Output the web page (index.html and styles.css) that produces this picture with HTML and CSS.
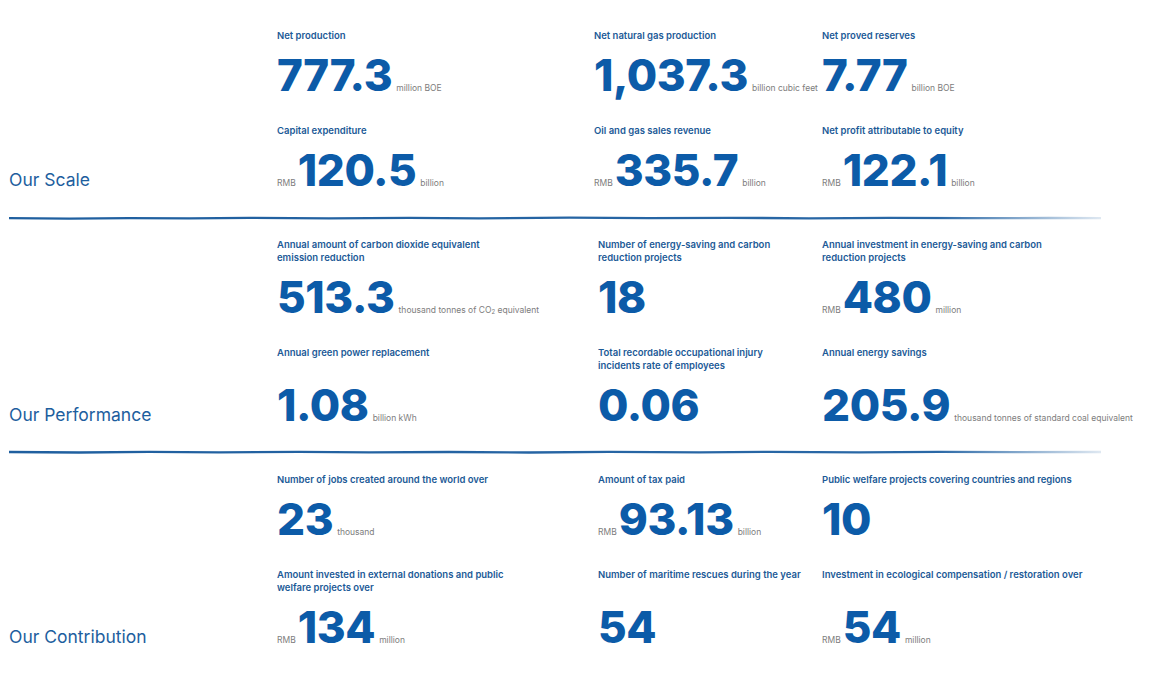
FILE: index.html
```html
<!DOCTYPE html>
<html lang="en">
<head>
<meta charset="utf-8">
<title>Key figures</title>
<link rel="stylesheet" href="styles.css">
</head>
<body>
<main class="page">
  <section class="section s1">
    <h2 class="title">Our Scale</h2>
    <div class="grid">
      <div class="cell"><p class="label">Net production</p><div class="fig"><span class="num">777.3</span><span class="unit">million BOE</span></div></div>
      <div class="cell"><p class="label">Net natural gas production</p><div class="fig"><span class="num">1,037.3</span><span class="unit">billion cubic feet</span></div></div>
      <div class="cell"><p class="label">Net proved reserves</p><div class="fig"><span class="num">7.77</span><span class="unit">billion BOE</span></div></div>
      <div class="cell"><p class="label">Capital expenditure</p><div class="fig"><span class="pre">RMB</span><span class="num">120.5</span><span class="unit">billion</span></div></div>
      <div class="cell"><p class="label">Oil and gas sales revenue</p><div class="fig"><span class="pre">RMB</span><span class="num">335.7</span><span class="unit">billion</span></div></div>
      <div class="cell"><p class="label">Net profit attributable to equity</p><div class="fig"><span class="pre">RMB</span><span class="num">122.1</span><span class="unit">billion</span></div></div>
    </div>
  </section>
  <div class="divider"><svg viewBox="0 0 1092 6" preserveAspectRatio="none"><defs><linearGradient id="g1" x1="0" x2="1" y1="0" y2="0"><stop offset="0" stop-color="#1f5f9f"/><stop offset="0.85" stop-color="#2a68a6"/><stop offset="1" stop-color="#2a68a6" stop-opacity="0.15"/></linearGradient></defs><path d="M0 3.2 L60 3.6 L120 3.1 L180 3.4 L240 2.8 L320 3.3 L400 2.9 L470 3.4 L560 2.7 L640 3.2 L720 2.8 L800 3.3 L880 2.9 L960 3.2 L1040 3.0 L1092 3.1" fill="none" stroke="url(#g1)" stroke-width="2.3" stroke-linecap="round"/></svg></div>
  <section class="section s2">
    <h2 class="title">Our Performance</h2>
    <div class="grid">
      <div class="cell"><p class="label">Annual amount of carbon dioxide equivalent<br>emission reduction</p><div class="fig"><span class="num">513.3</span><span class="unit">thousand tonnes of CO<sub>2</sub> equivalent</span></div></div>
      <div class="cell"><p class="label">Number of energy-saving and carbon<br>reduction projects</p><div class="fig"><span class="num">18</span></div></div>
      <div class="cell"><p class="label">Annual investment in energy-saving and carbon<br>reduction projects</p><div class="fig"><span class="pre">RMB</span><span class="num">480</span><span class="unit">million</span></div></div>
      <div class="cell"><p class="label">Annual green power replacement</p><div class="fig"><span class="num">1.08</span><span class="unit">billion kWh</span></div></div>
      <div class="cell"><p class="label">Total recordable occupational injury<br>incidents rate of employees</p><div class="fig"><span class="num">0.06</span></div></div>
      <div class="cell"><p class="label">Annual energy savings</p><div class="fig"><span class="num">205.9</span><span class="unit">thousand tonnes of standard coal equivalent</span></div></div>
    </div>
  </section>
  <div class="divider"><svg viewBox="0 0 1092 6" preserveAspectRatio="none"><defs><linearGradient id="g2" x1="0" x2="1" y1="0" y2="0"><stop offset="0" stop-color="#1f5f9f"/><stop offset="0.85" stop-color="#2a68a6"/><stop offset="1" stop-color="#2a68a6" stop-opacity="0.15"/></linearGradient></defs><path d="M0 3.0 L70 3.5 L140 2.9 L210 3.4 L290 2.8 L360 3.3 L440 3.0 L520 3.5 L600 2.8 L690 3.3 L760 2.9 L850 3.4 L930 2.8 L1010 3.2 L1092 3.0" fill="none" stroke="url(#g2)" stroke-width="2.3" stroke-linecap="round"/></svg></div>
  <section class="section s3">
    <h2 class="title">Our Contribution</h2>
    <div class="grid">
      <div class="cell"><p class="label">Number of jobs created around the world over</p><div class="fig"><span class="num">23</span><span class="unit">thousand</span></div></div>
      <div class="cell"><p class="label">Amount of tax paid</p><div class="fig"><span class="pre">RMB</span><span class="num">93.13</span><span class="unit">billion</span></div></div>
      <div class="cell"><p class="label">Public welfare projects covering countries and regions</p><div class="fig"><span class="num">10</span></div></div>
      <div class="cell"><p class="label">Amount invested in external donations and public<br>welfare projects over</p><div class="fig"><span class="pre">RMB</span><span class="num">134</span><span class="unit">million</span></div></div>
      <div class="cell"><p class="label">Number of maritime rescues during the year</p><div class="fig"><span class="num">54</span></div></div>
      <div class="cell"><p class="label">Investment in ecological compensation / restoration over</p><div class="fig"><span class="pre">RMB</span><span class="num">54</span><span class="unit">million</span></div></div>
    </div>
  </section>
</main>
</body>
</html>
```
FILE: styles.css
```css
html, body {
  margin: 0;
  padding: 0;
  background: #ffffff;
}
body {
  font-family: Inter, "Noto Sans", sans-serif;
  width: 1152px;
  height: 674px;
  overflow: hidden;
}
.page {
  padding-left: 9px;
}
.section {
  display: flex;
  align-items: stretch;
}
.s1 { padding-top: 29px; padding-bottom: 23px; }
.s2 { padding-top: 17px; padding-bottom: 22px; }
.s3 { padding-top: 18px; }

.title {
  width: 268px;
  flex: none;
  margin: 0;
  font-size: 17.5px;
  line-height: 18px;
  font-weight: 400;
  color: #1d5e9e;
  align-self: flex-end;
  padding-bottom: 3px;
}
.grid {
  display: grid;
  row-gap: 27px;
}
.s1 .grid { grid-template-columns: 317px 228px 330px; }
.s2 .grid, .s3 .grid { grid-template-columns: 321px 224px 330px; }

.cell {
  display: flex;
  flex-direction: column;
}
.label {
  margin: 0 0 11px 0;
  font-size: 9.5px;
  line-height: 13px;
  font-weight: 600;
  color: #1c5a97;
}
.fig {
  margin-top: auto;
  display: flex;
  align-items: baseline;
  white-space: nowrap;
}
.num {
  font-size: 44px;
  line-height: 44px;
  font-weight: 800;
  color: #0c5ba8;
  letter-spacing: -0.4px;
}
.unit, .pre {
  font-size: 8.5px;
  color: #7d7d7d;
  font-weight: 400;
}
.unit { margin-left: 4px; }
.pre { margin-right: 2px; }
.unit sub {
  font-size: 6px;
  vertical-align: -1px;
  line-height: 0;
}
.divider {
  width: 1092px;
  height: 6px;
}
.divider svg {
  display: block;
  width: 1092px;
  height: 6px;
}
```
